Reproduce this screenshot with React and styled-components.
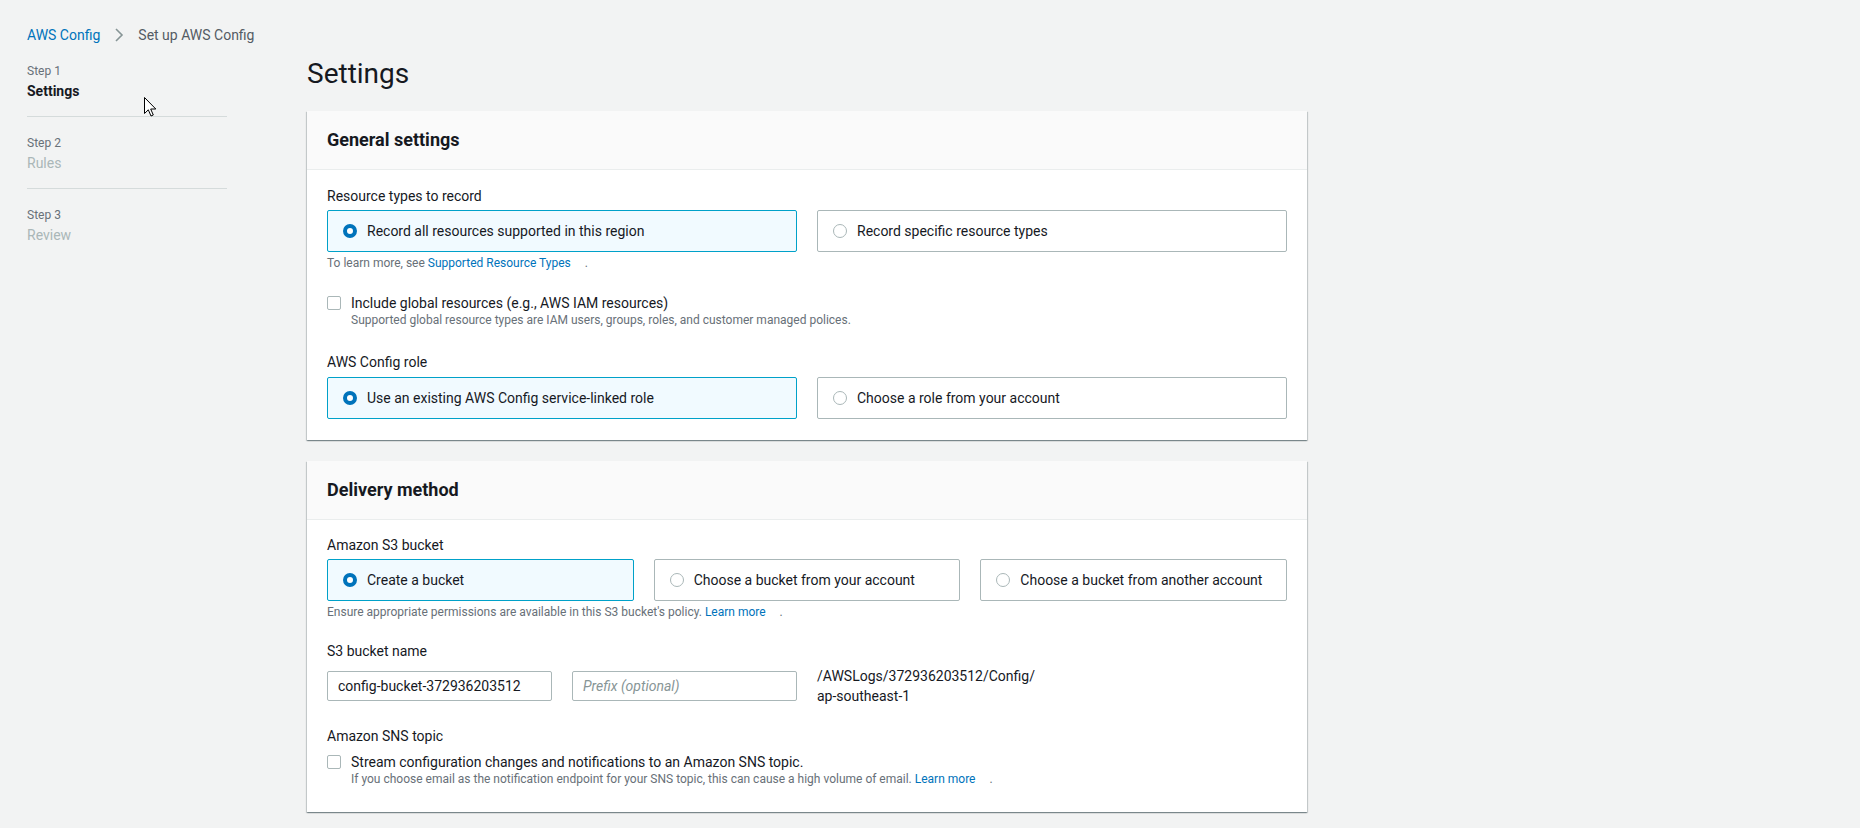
import React from 'react';
import styled, { createGlobalStyle } from 'styled-components';

const GlobalStyle = createGlobalStyle`
  html, body {
    margin: 0;
    background: #f2f3f3;
  }
  body {
    font-family: Roboto, "Liberation Sans", Arial, sans-serif;
    font-size: 14px;
    line-height: 20px;
    color: #16191f;
  }
`;

const Page = styled.div`
  position: relative;
  box-sizing: border-box;
  min-height: 828px;
  padding: 25px 0 0 27px;
`;

const Breadcrumbs = styled.nav`
  display: flex;
  align-items: center;
  gap: 14px;
  height: 20px;
`;

const Crumb = styled.span`
  color: ${(p) => (p.$link ? '#0073bb' : '#545b64')};
`;

const Layout = styled.div`
  display: grid;
  grid-template-columns: 280px 1000px;
  margin-top: 12px;
`;

const Sidebar = styled.ol`
  list-style: none;
  margin: 0;
  padding: 6px 0 0;
  width: 200px;
`;

const StepItem = styled.li`
  padding: 18px 0 15px;
  border-bottom: 1px solid #d5dbdb;

  &:first-child {
    padding-top: 0;
  }
  &:last-child {
    border-bottom: none;
  }
`;

const StepLabel = styled.div`
  font-size: 12px;
  line-height: 16px;
  color: #687078;
  margin-bottom: 2px;
`;

const StepTitle = styled.div`
  font-size: 14px;
  line-height: 20px;
  font-weight: ${(p) => (p.$active ? 700 : 400)};
  color: ${(p) => (p.$active ? '#16191f' : '#aab7b8')};
`;

const Main = styled.main`
  display: flex;
  flex-direction: column;
  gap: 21px;
`;

const Heading = styled.h1`
  margin: 0 0 -1px;
  font-size: 28px;
  line-height: 34px;
  font-weight: 400;
`;

const Panel = styled.section`
  background: #fff;
  box-shadow: 0 1px 1px 0 rgba(0, 28, 36, 0.3), 1px 1px 1px 0 rgba(0, 28, 36, 0.15),
    -1px 1px 1px 0 rgba(0, 28, 36, 0.15);
`;

const PanelHeader = styled.header`
  display: flex;
  align-items: center;
  height: 58px;
  padding: 0 20px;
  background: #fafafa;
  border-bottom: 1px solid #eaeded;

  h2 {
    margin: 0;
    font-size: 18px;
    line-height: 22px;
    font-weight: 700;
  }
`;

const PanelBody = styled.div`
  padding: ${(p) => p.$top || 16}px 20px ${(p) => p.$bottom || 20}px;
`;

const Label = styled.div`
  margin-top: ${(p) => p.$top || 0}px;
`;

const TileGrid = styled.div`
  display: grid;
  grid-template-columns: repeat(${(p) => p.$cols}, 1fr);
  gap: 20px;
  margin-top: ${(p) => p.$top || 4}px;
`;

const Tile = styled.label`
  display: flex;
  align-items: center;
  gap: 10px;
  box-sizing: border-box;
  height: 42px;
  padding: 0 15px;
  border: 1px solid ${(p) => (p.$selected ? '#00a1c9' : '#aab7b8')};
  border-radius: 2px;
  background: ${(p) => (p.$selected ? '#f1faff' : '#fff')};
`;

const Radio = styled.span`
  box-sizing: border-box;
  flex: none;
  width: 14px;
  height: 14px;
  border-radius: 50%;
  background: #fff;
  border: ${(p) => (p.$checked ? '4px solid #0073bb' : '1px solid #aab7b8')};
`;

const Helper = styled.div`
  margin-top: 3px;
  font-size: 12px;
  line-height: 16px;
  color: #687078;
`;

const Link = styled.a`
  color: #0073bb;
  text-decoration: none;
`;

const IconGap = styled.span`
  display: inline-block;
  width: 14px;
`;

const CheckRow = styled.label`
  display: flex;
  align-items: center;
  gap: 10px;
  margin-top: ${(p) => p.$top}px;
`;

const CheckBox = styled.span`
  box-sizing: border-box;
  flex: none;
  width: 14px;
  height: 14px;
  border: 1px solid #aab7b8;
  border-radius: 2px;
  background: #fff;
`;

const CheckDesc = styled.div`
  margin-top: -1px;
  padding-left: 24px;
  font-size: 12px;
  line-height: 16px;
  color: #687078;
`;

const BucketRow = styled.div`
  display: grid;
  grid-template-columns: repeat(4, 1fr);
  gap: 20px;
  align-items: center;
  margin-top: 5px;
`;

const Input = styled.div`
  box-sizing: border-box;
  height: 30px;
  padding: 0 10px;
  border: 1px solid #aab7b8;
  border-radius: 2px;
  background: #fff;
  line-height: 28px;
  color: ${(p) => (p.$placeholder ? '#879596' : '#16191f')};
  font-style: ${(p) => (p.$placeholder ? 'italic' : 'normal')};
`;

const PathText = styled.div`
  line-height: 20px;
`;

const Cursor = styled.svg`
  position: absolute;
  left: 144px;
  top: 97px;
`;

const Chevron = () => (
  <svg width="10" height="16" viewBox="0 0 10 16">
    <polyline points="2,2 8,8 2,14" fill="none" stroke="#879596" strokeWidth="1.6" />
  </svg>
);

const RadioTile = ({ selected, children }) => (
  <Tile $selected={selected}>
    <Radio $checked={selected} />
    {children}
  </Tile>
);

const steps = [
  { label: 'Step 1', title: 'Settings', active: true },
  { label: 'Step 2', title: 'Rules' },
  { label: 'Step 3', title: 'Review' },
];

const App = () => {
  return (
    <Page>
      <GlobalStyle />
      <Breadcrumbs>
        <Crumb $link>AWS Config</Crumb>
        <Chevron />
        <Crumb>Set up AWS Config</Crumb>
      </Breadcrumbs>

      <Layout>
        <Sidebar>
          {steps.map((s) => (
            <StepItem key={s.label}>
              <StepLabel>{s.label}</StepLabel>
              <StepTitle $active={s.active}>{s.title}</StepTitle>
            </StepItem>
          ))}
        </Sidebar>

        <Main>
          <Heading>Settings</Heading>

          <Panel>
            <PanelHeader><h2>General settings</h2></PanelHeader>
            <PanelBody $bottom={21}>
              <Label>Resource types to record</Label>
              <TileGrid $cols={2}>
                <RadioTile selected>Record all resources supported in this region</RadioTile>
                <RadioTile>Record specific resource types</RadioTile>
              </TileGrid>
              <Helper>
                To learn more, see <Link>Supported Resource Types</Link><IconGap />.
              </Helper>

              <CheckRow $top={22}>
                <CheckBox />
                Include global resources (e.g., AWS IAM resources)
              </CheckRow>
              <CheckDesc>
                Supported global resource types are IAM users, groups, roles, and customer managed polices.
              </CheckDesc>

              <Label $top={24}>AWS Config role</Label>
              <TileGrid $cols={2} $top={5}>
                <RadioTile selected>Use an existing AWS Config service-linked role</RadioTile>
                <RadioTile>Choose a role from your account</RadioTile>
              </TileGrid>
            </PanelBody>
          </Panel>

          <Panel>
            <PanelHeader><h2>Delivery method</h2></PanelHeader>
            <PanelBody $top={15} $bottom={25}>
              <Label>Amazon S3 bucket</Label>
              <TileGrid $cols={3}>
                <RadioTile selected>Create a bucket</RadioTile>
                <RadioTile>Choose a bucket from your account</RadioTile>
                <RadioTile>Choose a bucket from another account</RadioTile>
              </TileGrid>
              <Helper>
                Ensure appropriate permissions are available in this S3 bucket's policy.{' '}
                <Link>Learn more</Link><IconGap />.
              </Helper>

              <Label $top={21}>S3 bucket name</Label>
              <BucketRow>
                <Input>config-bucket-372936203512</Input>
                <Input $placeholder>Prefix (optional)</Input>
                <PathText>/AWSLogs/372936203512/Config/ ap-southeast-1</PathText>
              </BucketRow>

              <Label $top={20}>Amazon SNS topic</Label>
              <CheckRow $top={6}>
                <CheckBox />
                Stream configuration changes and notifications to an Amazon SNS topic.
              </CheckRow>
              <CheckDesc>
                If you choose email as the notification endpoint for your SNS topic, this can cause a high
                volume of email. <Link>Learn more</Link><IconGap />.
              </CheckDesc>
            </PanelBody>
          </Panel>
        </Main>
      </Layout>

      <Cursor width="13" height="20" viewBox="0 0 13 20">
        <path
          d="M0.5 0.5 L0.5 16.5 L4.3 12.8 L7 19 L9.3 18 L6.7 12 L11.8 12 Z"
          fill="#fff"
          stroke="#000"
          strokeWidth="1"
          strokeLinejoin="round"
        />
      </Cursor>
    </Page>
  );
};

export default App;
